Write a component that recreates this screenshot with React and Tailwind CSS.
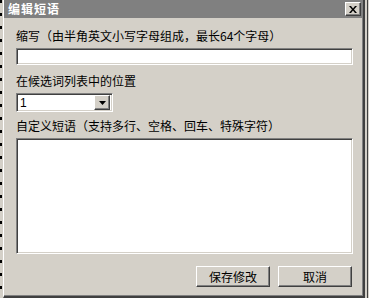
import React, { useState } from "react";

const raised =
  "border border-t-white border-l-white border-r-[#404040] border-b-[#404040] shadow-[inset_-1px_-1px_0_#808080]";
const sunken =
  "border border-t-[#808080] border-l-[#808080] border-r-white border-b-white shadow-[inset_1px_1px_0_#404040,inset_-1px_-1px_0_#d4d0c8]";

function App() {
  const [abbr, setAbbr] = useState("");
  const [phrase, setPhrase] = useState("");

  return (
    <div className="w-[369px] h-[298px] flex bg-[#d4d0c8] text-[12px] text-black font-['Noto_Sans_CJK_SC','Noto_Sans',sans-serif] overflow-hidden">
      {/* desktop behind the dialog */}
      <div className="w-[3px] h-full bg-[#d4d0c8] flex">
        <div className="w-[2px] h-full bg-[repeating-linear-gradient(to_bottom,#000_0px,#000_3px,transparent_3px,transparent_13px)]" />
      </div>

      {/* dialog */}
      <div className="w-[362px] h-full flex flex-col border-l border-l-white border-r-2 border-r-[#404040] border-b-2 border-b-[#404040] shadow-[inset_-1px_-1px_0_#808080]">
        <div className="h-[18px] mr-[1px] bg-[#808080] flex items-center justify-between pl-1 pr-[1px]">
          <span className="font-bold text-white leading-[12px] tracking-[1px]">编辑短语</span>
          <button
            className={`w-[16px] h-[14px] bg-[#d4d0c8] flex items-center justify-center ${raised}`}
          >
            <svg width="8" height="7" viewBox="0 0 8 7">
              <path d="M0 0h2l2 2.5L6 0h2L5 3.5L8 7H6L4 4.5L2 7H0l3-3.5z" fill="#000" />
            </svg>
          </button>
        </div>

        <div className="flex-1 flex flex-col pl-3 pr-[10px] pt-[11px]">
          <label className="leading-[14px]">缩写（由半角英文小写字母组成，最长64个字母）</label>
          <input
            value={abbr}
            onChange={(e) => setAbbr(e.target.value)}
            className={`mt-[5px] h-[17px] w-full bg-white outline-none px-1 ${sunken}`}
          />

          <label className="mt-[9px] leading-[14px]">在候选词列表中的位置</label>
          <div className={`mt-[5px] w-[97px] h-[19px] bg-white flex items-center justify-between ${sunken} p-[2px]`}>
            <span className="pl-[1px] leading-[12px] font-['Liberation_Sans',sans-serif]">1</span>
            <div className={`w-[16px] h-[15px] bg-[#d4d0c8] flex items-center justify-center ${raised}`}>
              <svg width="7" height="4" viewBox="0 0 7 4">
                <path d="M0 0h7L3.5 4z" fill="#000" />
              </svg>
            </div>
          </div>

          <label className="mt-[7px] leading-[14px]">自定义短语（支持多行、空格、回车、特殊字符）</label>
          <textarea
            value={phrase}
            onChange={(e) => setPhrase(e.target.value)}
            className={`mt-[5px] h-[116px] w-full bg-white outline-none resize-none p-1 ${sunken}`}
          />

          <div className="mt-[12px] flex justify-end gap-[8px] pr-[1px]">
            <button className={`w-[74px] h-[21px] bg-[#d4d0c8] leading-[12px] ${raised}`}>保存修改</button>
            <button className={`w-[74px] h-[21px] bg-[#d4d0c8] leading-[12px] ${raised}`}>取消</button>
          </div>
        </div>
      </div>

      <div className="w-[4px] h-full flex">
        <div className="w-[2px] h-full" />
        <div className="w-[1px] h-full bg-[#404040]" />
      </div>
    </div>
  );
}

export default App;
